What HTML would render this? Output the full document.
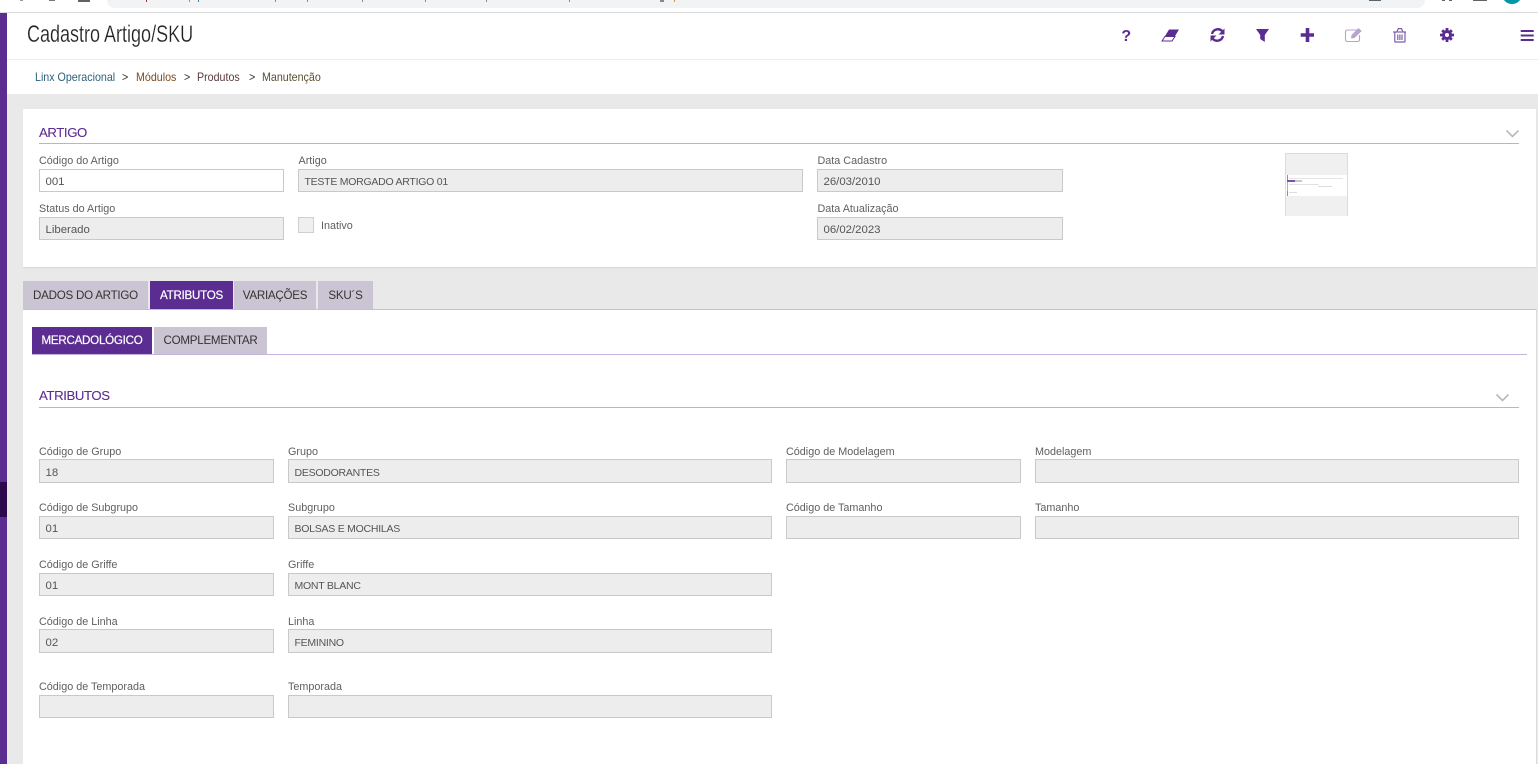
<!DOCTYPE html>
<html lang="pt"><head><meta charset="utf-8"><title>Cadastro Artigo/SKU</title>
<style>
html,body{margin:0;padding:0;width:1538px;height:764px;overflow:hidden;background:#e9e9e9;font-family:"Liberation Sans",Arial,sans-serif}
.a{position:absolute}
#p{position:absolute;left:0;top:0;width:1538px;height:764px;overflow:hidden}
.l{position:absolute;font-size:10.8px;line-height:13px;color:#5f5f5f;white-space:nowrap;margin-top:1px}
.i{position:absolute;box-sizing:border-box;height:23px;background:#ededed;border:1px solid #c9c9c9;font-size:10.500px;letter-spacing:-.25px;line-height:23px;padding-top:1px;color:#555;padding-left:5.500px;white-space:nowrap;overflow:hidden}
.i.d{font-size:11.400px;letter-spacing:0}
.i.m{height:24px;line-height:24px;padding-top:1px}
.t{position:absolute;box-sizing:border-box;height:28px;background:#cbc4d2;color:#333;font-size:11.600px;letter-spacing:-.25px;line-height:29px;text-align:center;white-space:nowrap}
.t.on{background:#5c2d91;color:#fff;-webkit-text-stroke:.2px #fff}
.h{position:absolute;font-size:13.200px;letter-spacing:-.4px;line-height:16px;color:#5c2d91;-webkit-text-stroke:.1px #5c2d91}
.r{position:absolute;height:1px;background:#bfb0d0}
.b{position:absolute;font-size:12px;line-height:14px;white-space:nowrap;transform:scaleX(.89);transform-origin:0 0}
.k{position:absolute;top:0;width:1px;height:2px;background:#888}
</style></head><body><div id="p">

<div class="a" style="left:0;top:0;width:1538px;height:12px;background:#fff"></div>
<div class="a" style="left:107px;top:0;width:1318px;height:8px;background:#f1f3f4;border-radius:0 0 10px 10px"></div>
<div class="a" style="left:78px;top:0;width:12px;height:2px;background:#5f6368"></div>
<div class="a" style="left:49px;top:0;width:6px;height:1px;background:#777"></div>
<div class="a" style="left:20px;top:0;width:3px;height:1px;background:#999"></div>
<div class="k" style="left:146px;background:#a33"></div>
<div class="k" style="left:189px;background:#c83"></div>
<div class="k" style="left:198px;background:#38a"></div>
<div class="k" style="left:275px"></div>
<div class="k" style="left:307px"></div>
<div class="k" style="left:362px"></div>
<div class="k" style="left:425px"></div>
<div class="k" style="left:486px"></div>
<div class="k" style="left:569px"></div>
<div class="k" style="left:660px;width:4px"></div>
<div class="k" style="left:674px;background:#c93"></div>
<div class="a" style="left:1369px;top:0;width:12px;height:1px;background:#5f6368"></div>
<div class="a" style="left:1442px;top:0;width:3px;height:1px;background:#5f6368"></div>
<div class="a" style="left:1449px;top:0;width:3px;height:1px;background:#5f6368"></div>
<div class="a" style="left:1473px;top:0;width:14px;height:1px;background:#5f6368"></div>
<div class="a" style="left:1502px;top:-6px;width:20px;height:10px;background:#0097a7;border-radius:0 0 10px 10px"></div>
<div class="a" style="left:0;top:12px;width:1538px;height:1px;background:#dcdcdc"></div>

<div class="a" style="left:0;top:13px;width:7px;height:751px;background:#5c2d91"></div>
<div class="a" style="left:0;top:482px;width:7px;height:35px;background:#2b0a4d"></div>

<div class="a" style="left:7px;top:13px;width:1531px;height:81px;background:#fff"></div>
<div class="a" style="left:7px;top:59px;width:1531px;height:1px;background:#ececec"></div>

<div class="a" style="left:27px;top:21px;font-size:24px;line-height:28px;color:#222;white-space:nowrap;transform:scaleX(.75);transform-origin:0 0;font-weight:normal;-webkit-text-stroke:.25px #fff">Cadastro Artigo/SKU</div>

<div class="b" style="left:35px;top:70px;color:#2f5f7a">Linx Operacional</div>
<div class="b" style="left:122px;top:70px;color:#333">&gt;</div>
<div class="b" style="left:136px;top:70px;color:#7a4a20">Módulos</div>
<div class="b" style="left:184px;top:70px;color:#333">&gt;</div>
<div class="b" style="left:197px;top:70px;color:#5a3a3a">Produtos</div>
<div class="b" style="left:249px;top:70px;color:#333">&gt;</div>
<div class="b" style="left:262px;top:70px;color:#5a5030">Manutenção</div>

<svg class="a" style="left:1100px;top:20px" width="438" height="30" viewBox="0 0 438 30">
<text x="26.300" y="21" font-family="Liberation Sans,sans-serif" font-size="16" font-weight="bold" fill="#5c2d91" text-anchor="middle">?</text>
<path d="M62 21 L69 9.500 H79 L72 21 Z" fill="#5c2d91"/><path d="M62 21 L65 16.500 H75 L72 21 Z" fill="#fff" stroke="#5c2d91" stroke-width="1"/>
<path d="M112 14 A6 6 0 0 1 122.500 11.500" fill="none" stroke="#5c2d91" stroke-width="2.400"/>
<path d="M124.500 8.500 V14.500 H118.500 Z" fill="#5c2d91"/>
<path d="M123 16 A6 6 0 0 1 112.500 18.500" fill="none" stroke="#5c2d91" stroke-width="2.400"/>
<path d="M110.500 21.500 V15.500 H116.500 Z" fill="#5c2d91"/>
<path d="M156 9 H169 L164.800 15 V22 L160.200 19 V15 Z" fill="#5c2d91"/>
<path d="M207.500 8 V22 M200.700 15 H214" stroke="#5c2d91" stroke-width="3.600" fill="none"/>
<path d="M258.500 10 H247.500 Q245.500 10 245.500 12 V19.500 Q245.500 21.500 247.500 21.500 H257.500 Q259.500 21.500 259.500 19.500 V15" fill="none" stroke="#b7a3cf" stroke-width="1.100"/>
<path d="M251 18.500 L251.500 15 L258.500 8 L261.700 11 L254.500 18 Z" fill="#b7a3cf"/>
<g fill="none" stroke="#7f5cab" stroke-width="1.200"><path d="M294.800 12.500 V21.500 Q294.800 22 295.500 22 H304.500 Q305 22 305 21.500 V12.500"/><path d="M293 12 H306"/><path d="M297 11.500 L298.300 8.600 H301.500 L302.800 11.500"/><path d="M297.800 14.500 V20 M299.900 14.500 V20 M302 14.500 V20"/></g>
<g fill="#5c2d91"><circle cx="347" cy="15" r="5"/><path d="M345.600 8 H348.400 V22 H345.600 Z M340 13.600 H354 V16.400 H340 Z"/><path d="M341.200 11.200 L343.200 9.200 L352.800 18.800 L350.800 20.800 Z M350.800 9.200 L352.800 11.200 L343.200 20.800 L341.200 18.800 Z"/></g>
<circle cx="347" cy="15" r="2" fill="#fff"/>
<path d="M420.700 11 H433.700 M420.700 15.500 H433.700 M420.700 20 H433.700" stroke="#5c2d91" stroke-width="2" fill="none"/>
</svg>

<div class="a" style="left:23px;top:109px;width:1513px;height:158px;background:#fff;box-shadow:0 1px 1px #d5d5d5"></div>
<div class="h" style="left:39px;top:125px">ARTIGO</div>
<div class="r" style="left:39px;top:143px;width:1480px"></div>
<svg class="a" style="left:1505px;top:129px" width="16" height="10"><path d="M1.500 1.500 L7.500 7.500 L13.500 1.500" fill="none" stroke="#b9b9b9" stroke-width="1.600"/></svg>

<div class="l" style="left:39px;top:154px">Código do Artigo</div>
<div class="i d" style="left:39px;top:169px;width:245px;background:#fff">001</div>
<div class="l" style="left:298.500px;top:154px">Artigo</div>
<div class="i" style="left:298px;top:169px;width:505px">TESTE MORGADO ARTIGO 01</div>
<div class="l" style="left:817.500px;top:154px">Data Cadastro</div>
<div class="i d" style="left:817px;top:169px;width:246px">26/03/2010</div>
<div class="l" style="left:39px;top:202px">Status do Artigo</div>
<div class="i d" style="left:39px;top:217px;width:245px">Liberado</div>
<div class="a" style="left:298px;top:217px;width:16px;height:16px;box-sizing:border-box;background:#efefef;border:1px solid #cfcfcf"></div>
<div class="l" style="left:321px;top:219px">Inativo</div>
<div class="l" style="left:817.500px;top:202px">Data Atualização</div>
<div class="i d" style="left:817px;top:217px;width:246px">06/02/2023</div>

<div class="a" style="left:1285px;top:153px;width:63px;height:63px;box-sizing:border-box;background:#f0f0f0;border:1px solid #dcdcdc;border-width:1px 1px 0 1px;overflow:hidden">
<div class="a" style="left:0;top:21px;width:61px;height:21px;background:#fff"></div>
<div class="a" style="left:1px;top:21px;width:1px;height:21px;background:#9a80c0"></div>
<div class="a" style="left:1px;top:26px;width:8px;height:2px;background:#7a52a8"></div>
<div class="a" style="left:9px;top:26px;width:7px;height:2px;background:#cbc4d2"></div>
<div class="a" style="left:1px;top:28px;width:1px;height:9px;background:#e89aa5"></div>
<div class="a" style="left:3px;top:30px;width:30px;height:1px;background:#e2e2e2"></div>
<div class="a" style="left:3px;top:24px;width:54px;height:1px;background:#e4e4e4"></div>
<div class="a" style="left:32px;top:32px;width:14px;height:1px;background:#dcdcdc"></div>
<div class="a" style="left:3px;top:38px;width:8px;height:1px;background:#ddd"></div>
</div>

<div class="t" style="left:23px;top:281px;width:125px">DADOS DO ARTIGO</div>
<div class="t on" style="left:150px;top:281px;width:83px">ATRIBUTOS</div>
<div class="t" style="left:234px;top:281px;width:82px">VARIAÇÕES</div>
<div class="t" style="left:318px;top:281px;width:55px">SKU´S</div>

<div class="a" style="left:23px;top:309px;width:1513px;height:455px;background:#fff"></div>
<div class="a" style="left:23px;top:309px;width:1513px;height:1px;background:#c9bcd8"></div>
<div class="a" style="left:1536px;top:309px;width:1px;height:455px;background:#dcdcdc"></div>

<div class="t on" style="left:32px;top:327px;width:120px;height:27px;line-height:28px">MERCADOLÓGICO</div>
<div class="t" style="left:154px;top:327px;width:113px;height:27px;line-height:28px">COMPLEMENTAR</div>
<div class="a" style="left:32px;top:354px;width:1495px;height:1px;background:#c3b2dc"></div>

<div class="h" style="left:39px;top:388px">ATRIBUTOS</div>
<div class="r" style="left:39px;top:407px;width:1480px"></div>
<svg class="a" style="left:1495px;top:393px" width="16" height="10"><path d="M1.500 1.500 L7.500 7.500 L13.500 1.500" fill="none" stroke="#b9b9b9" stroke-width="1.600"/></svg>

<div class="l" style="left:39px;top:445px">Código de Grupo</div>
<div class="i d m" style="left:39px;top:459px;width:235px">18</div>
<div class="l" style="left:288px;top:445px">Grupo</div>
<div class="i m" style="left:288px;top:459px;width:484px">DESODORANTES</div>
<div class="l" style="left:786px;top:445px">Código de Modelagem</div>
<div class="i m" style="left:786px;top:459px;width:235px"></div>
<div class="l" style="left:1035px;top:445px">Modelagem</div>
<div class="i m" style="left:1035px;top:459px;width:484px"></div>

<div class="l" style="left:39px;top:501px">Código de Subgrupo</div>
<div class="i d" style="left:39px;top:516px;width:235px">01</div>
<div class="l" style="left:288px;top:501px">Subgrupo</div>
<div class="i" style="left:288px;top:516px;width:484px">BOLSAS E MOCHILAS</div>
<div class="l" style="left:786px;top:501px">Código de Tamanho</div>
<div class="i" style="left:786px;top:516px;width:235px"></div>
<div class="l" style="left:1035px;top:501px">Tamanho</div>
<div class="i" style="left:1035px;top:516px;width:484px"></div>

<div class="l" style="left:39px;top:558px">Código de Griffe</div>
<div class="i d" style="left:39px;top:573px;width:235px">01</div>
<div class="l" style="left:288px;top:558px">Griffe</div>
<div class="i" style="left:288px;top:573px;width:484px">MONT BLANC</div>

<div class="l" style="left:39px;top:615px">Código de Linha</div>
<div class="i d m" style="left:39px;top:629px;width:235px">02</div>
<div class="l" style="left:288px;top:615px">Linha</div>
<div class="i m" style="left:288px;top:629px;width:484px">FEMININO</div>

<div class="l" style="left:39px;top:680px">Código de Temporada</div>
<div class="i" style="left:39px;top:695px;width:235px"></div>
<div class="l" style="left:288px;top:680px">Temporada</div>
<div class="i" style="left:288px;top:695px;width:484px"></div>

</div></body></html>
